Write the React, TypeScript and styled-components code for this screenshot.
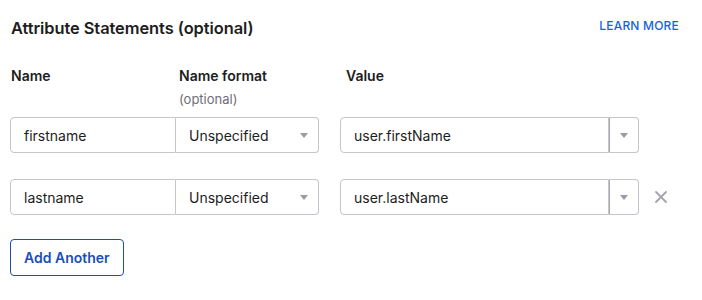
import React from "react";
import styled, { createGlobalStyle } from "styled-components";

const GlobalStyle = createGlobalStyle`
  body {
    margin: 0;
    background: #ffffff;
    font-family: Inter, "Noto Sans", sans-serif;
    color: #1d1d21;
  }
`;

const Container = styled.section`
  width: 702px;
  height: 300px;
  padding: 18px 23px 0 10px;
  box-sizing: border-box;
`;

const Header = styled.header`
  display: flex;
  justify-content: space-between;
  align-items: center;
  height: 20px;
`;

const Title = styled.h2`
  margin: 0 0 0 1px;
  font-size: 16.4px;
  font-weight: 600;
  letter-spacing: -0.05px;
`;

const LearnMore = styled.a`
  font-size: 12px;
  font-weight: 500;
  color: #1662dd;
  text-decoration: none;
  letter-spacing: 0.2px;
  margin-top: -5px;
`;

const Grid = styled.div`
  display: grid;
  grid-template-columns: 165px 143px 21px 299px auto;
  margin-top: 29px;
`;

const ColHead = styled.div<{ $col: number; $inset: number }>`
  grid-column: ${(p) => p.$col};
  padding-left: ${(p) => p.$inset}px;
  font-size: 14px;
  font-weight: 600;
  line-height: 17px;
`;

const Optional = styled.div`
  font-size: 13px;
  font-weight: 400;
  color: #6e6e78;
  margin-top: 7px;
  line-height: 16px;
`;

const Rows = styled.div`
  display: flex;
  flex-direction: column;
  gap: 26px;
  margin-top: 10px;
`;

const Row = styled.div`
  display: flex;
  align-items: center;
  height: 36px;
`;

const Field = styled.div<{ $w: number; $joinLeft?: boolean; $joinRight?: boolean }>`
  width: ${(p) => p.$w}px;
  height: 36px;
  box-sizing: border-box;
  border: 1px solid #c5c5cc;
  border-left-width: ${(p) => (p.$joinLeft ? 0 : 1)}px;
  border-radius: ${(p) =>
    p.$joinLeft ? "0 4px 4px 0" : p.$joinRight ? "4px 0 0 4px" : "4px"};
  display: flex;
  align-items: center;
  padding-left: 13px;
  padding-right: 10px;
  font-size: 14px;
  color: #1d1d21;
  background: #fff;
`;

const FieldText = styled.span`
  flex: 1;
`;

const Caret = styled.span`
  width: 0;
  height: 0;
  border-left: 4px solid transparent;
  border-right: 4px solid transparent;
  border-top: 5px solid #9a9aa2;
`;

const Spacer = styled.div`
  width: 21px;
`;

const CaretButton = styled.div`
  width: 30px;
  height: 36px;
  box-sizing: border-box;
  border: 1px solid #c5c5cc;
  border-left-color: #a9a9b0;
  border-radius: 0 4px 4px 0;
  display: flex;
  align-items: center;
  justify-content: center;
`;

const Remove = styled.button`
  margin-left: 15px;
  border: 0;
  background: none;
  padding: 0;
  width: 14px;
  height: 14px;
  display: flex;
  cursor: pointer;
`;

const AddButton = styled.button`
  margin-top: 24px;
  height: 37px;
  padding: 0 13px;
  border: 1px solid #1a4fb8;
  border-radius: 4px;
  background: #fff;
  color: #1a4fb8;
  font-family: Inter, "Noto Sans", sans-serif;
  font-size: 14px;
  font-weight: 600;
  cursor: pointer;
`;

interface IStatement {
  name: string;
  format: string;
  value: string;
  removable: boolean;
}

const statements: IStatement[] = [
  { name: "firstname", format: "Unspecified", value: "user.firstName", removable: false },
  { name: "lastname", format: "Unspecified", value: "user.lastName", removable: true },
];

const App = () => {
  return (
    <>
      <GlobalStyle />
      <Container>
        <Header>
          <Title>Attribute Statements (optional)</Title>
          <LearnMore href="#">LEARN MORE</LearnMore>
        </Header>
        <Grid>
          <ColHead $col={1} $inset={1}>Name</ColHead>
          <ColHead $col={2} $inset={4}>
            Name format
            <Optional>(optional)</Optional>
          </ColHead>
          <ColHead $col={4} $inset={7}>Value</ColHead>
        </Grid>
        <Rows>
          {statements.map((s) => (
            <Row key={s.name}>
              <Field $w={166} $joinRight>
                <FieldText>{s.name}</FieldText>
              </Field>
              <Field $w={143} $joinLeft>
                <FieldText>{s.format}</FieldText>
                <Caret />
              </Field>
              <Spacer />
              <Field $w={269} $joinRight>
                <FieldText>{s.value}</FieldText>
              </Field>
              <CaretButton>
                <Caret />
              </CaretButton>
              {s.removable && (
                <Remove aria-label="Remove">
                  <svg width="14" height="14" viewBox="0 0 14 14">
                    <path
                      d="M2 2 L12 12 M12 2 L2 12"
                      stroke="#a3a3ab"
                      strokeWidth="1.8"
                      strokeLinecap="round"
                    />
                  </svg>
                </Remove>
              )}
            </Row>
          ))}
        </Rows>
        <AddButton>Add Another</AddButton>
      </Container>
    </>
  );
};

export default App;
